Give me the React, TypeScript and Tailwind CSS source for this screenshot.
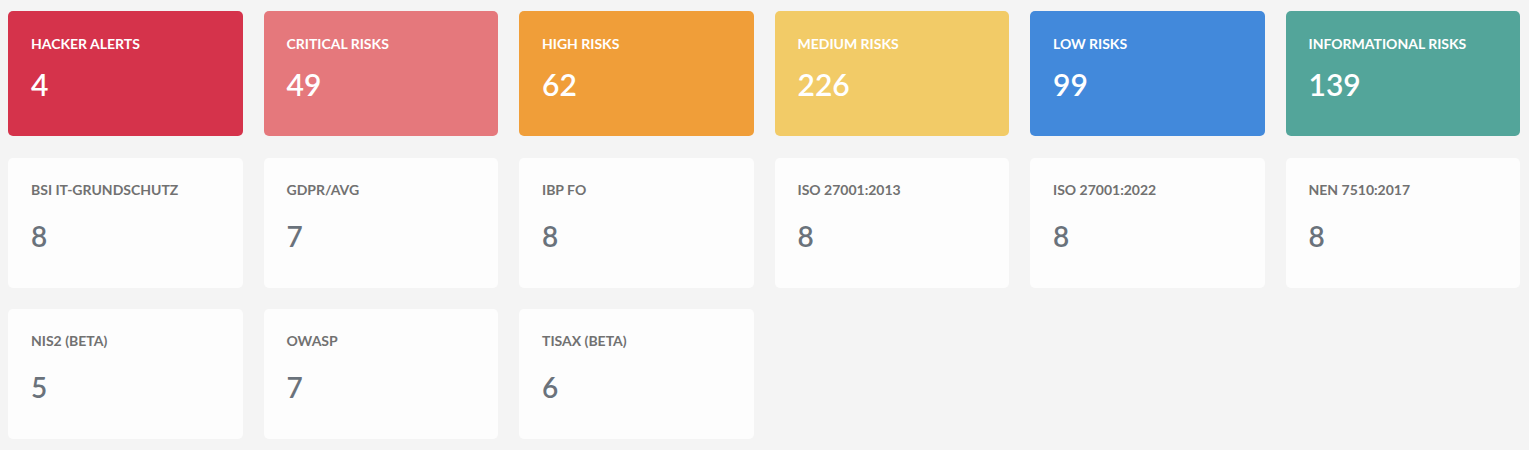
import React from "react";

type Stat = { label: string; value: number; bg: string };

const risks: Stat[] = [
  { label: "HACKER ALERTS", value: 4, bg: "bg-[#d5334b]" },
  { label: "CRITICAL RISKS", value: 49, bg: "bg-[#e5787c]" },
  { label: "HIGH RISKS", value: 62, bg: "bg-[#f09e39]" },
  { label: "MEDIUM RISKS", value: 226, bg: "bg-[#f2cb67]" },
  { label: "LOW RISKS", value: 99, bg: "bg-[#4289db]" },
  { label: "INFORMATIONAL RISKS", value: 139, bg: "bg-[#53a59a]" },
];

const frameworks: { label: string; value: number }[] = [
  { label: "BSI IT-GRUNDSCHUTZ", value: 8 },
  { label: "GDPR/AVG", value: 7 },
  { label: "IBP FO", value: 8 },
  { label: "ISO 27001:2013", value: 8 },
  { label: "ISO 27001:2022", value: 8 },
  { label: "NEN 7510:2017", value: 8 },
  { label: "NIS2 (BETA)", value: 5 },
  { label: "OWASP", value: 7 },
  { label: "TISAX (BETA)", value: 6 },
];

function RiskCard({ label, value, bg }: Stat) {
  return (
    <div className={`${bg} h-[125px] rounded-[5px] px-[23px] pt-[24px] text-white`}>
      <div className="text-[14px] font-bold leading-[17px]">{label}</div>
      <div className="mt-[14px] text-[30px] font-semibold leading-[36px]">{value}</div>
    </div>
  );
}

function FrameworkCard({ label, value }: { label: string; value: number }) {
  return (
    <div className="h-[130px] rounded-[5px] bg-[#fdfdfd] px-[23px] pt-[23px]">
      <div className="text-[14px] font-bold leading-[17px] text-[#717171]">{label}</div>
      <div className="mt-[21px] text-[28px] font-semibold leading-[34px] text-[#6a727b]">{value}</div>
    </div>
  );
}

export default function App() {
  return (
    <div
      className="min-h-[450px] bg-[#f4f4f4] pl-2 pr-[9px] pt-[11px]"
      style={{ fontFamily: "Lato, 'Noto Sans', sans-serif" }}
    >
      <div className="grid grid-cols-6 gap-x-[21px] gap-y-[21.5px]">
        {risks.map((r) => (
          <RiskCard key={r.label} {...r} />
        ))}
        {frameworks.map((f) => (
          <FrameworkCard key={f.label} {...f} />
        ))}
      </div>
    </div>
  );
}
